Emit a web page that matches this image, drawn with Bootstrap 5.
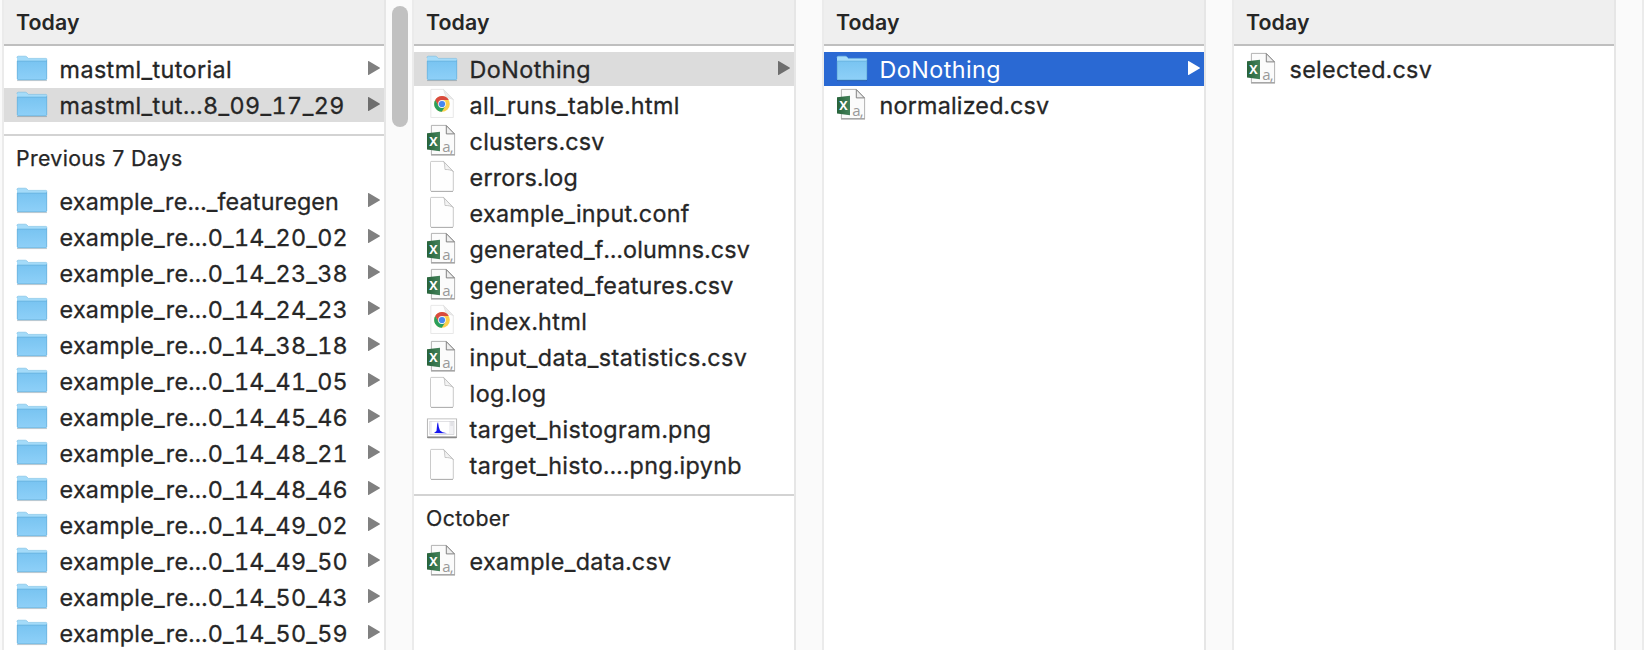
<!DOCTYPE html>
<html lang="en">
<head>
<meta charset="utf-8">
<title>Finder columns</title>
<link href="https://cdn.jsdelivr.net/npm/bootstrap@5.3.0/dist/css/bootstrap.min.css" rel="stylesheet">
<style>
body{font-family:Inter,"Liberation Sans",sans-serif;color:#262626;background:#fafafa}
.browser{width:1644px;height:650px;padding-left:2px}
.pane{width:384px;border-left:2px solid #ebebeb;border-right:2px solid #e6e6e6;background:#fff}
.gutter{width:26px;background:#fafafa}
.pane-head{height:46px;background:#efefef;border-bottom:2px solid #bfbfbf;padding-left:12px;font-size:21.3px;font-weight:600;line-height:44px;letter-spacing:.1px}
.group-head{height:50px;margin-top:12px;border-top:2px solid #d3d3d3;padding-left:12px;font-size:21.3px;line-height:44px;letter-spacing:.36px;-webkit-text-stroke:.25px currentColor}
.entries{padding-top:6px}
.entry{height:34px;margin-bottom:2px;padding-left:12px;padding-right:4px;font-size:23.3px;line-height:36px;letter-spacing:.25px;font-feature-settings:"tnum"}
.entry span{-webkit-text-stroke:.3px currentColor}
.active-row span{-webkit-text-stroke:0}
.group-head + .entries{padding-top:0}
.entries .entry:last-child{margin-bottom:0}
.entry svg{flex:none}
.entry .pic{width:32px;height:34px;margin-right:11.6px}
.arrow{width:12px;height:14px;fill:#808080;margin-left:auto;margin-top:9px}
.inactive{background:#dcdcdc}
.inactive .arrow{fill:#6e6e6e}
.active-row{background:#2a69d3;color:#fff}
.active-row .arrow{fill:#fff}
.thumb{width:16px;height:121px;margin:6px 0 0 6px;background:#c1c1c1;border-radius:8px}
</style>
</head>
<body>
<svg width="0" height="0" class="position-absolute" aria-hidden="true">
  <defs>
    <linearGradient id="fold" x1="0" y1="0" x2="0" y2="1"><stop offset="0" stop-color="#79c4f1"/><stop offset="1" stop-color="#8ed0f8"/></linearGradient>
    <linearGradient id="xl" x1="0" y1="0" x2="1" y2="0"><stop offset="0" stop-color="#27633b"/><stop offset="1" stop-color="#43825a"/></linearGradient>
    <linearGradient id="curl" x1="0" y1="1" x2="1" y2="0"><stop offset="0" stop-color="#fff"/><stop offset="1" stop-color="#dedede"/></linearGradient>
    <symbol id="folder" viewBox="0 0 32 34">
      <path d="M1 28.6h30" stroke="#000" stroke-opacity=".2" stroke-width="1"/>
      <path d="M1 8V5.5Q1 4.2 2.3 4.2H9.3Q10.3 4.2 11 5L12.3 6.4H29.8Q31 6.4 31 7.6V12H1Z" fill="#a4dbf9"/>
      <path d="M1 6V5.5Q1 4.2 2.3 4.2H9.3Q10.3 4.2 11 5L12.3 6.4H29.8Q31 6.4 31 7.6" fill="none" stroke="#77bce3" stroke-width=".6"/>
      <path d="M1 9.3H31V27Q31 28 30 28H2Q1 28 1 27Z" fill="url(#fold)"/>
      <path d="M1 9.2H31" stroke="#63b0df" stroke-width=".9"/>
      <path d="M1.3 9V27M30.7 8V27M1.5 27.8H30.5" stroke="#68b0da" stroke-width=".7"/>
    </symbol>
    <symbol id="blank" viewBox="0 0 32 34">
      <path d="M5 1.4H17.5L27.3 11.5V30Q27.3 31.3 26.3 31.3H5.5Q4.5 31.3 4.5 30V2.5Q4.5 1.4 5 1.4Z" fill="#fefefe" stroke="#c4c4c4" stroke-width=".9"/>
      <path d="M5 31.5H27" stroke="#a8a8a8" stroke-width=".8"/>
      <path d="M17.5 1.4C19 3 18.5 6.5 19 9.5C22 9.4 25.5 10 27.3 11.5Z" fill="url(#curl)" stroke="#bbb" stroke-width=".8"/>
    </symbol>
    <symbol id="chrome" viewBox="0 0 32 34">
      <path d="M5 1.4H17.5L27.3 11.5V29.5H4.8V1.6Z" fill="#fefefe" stroke="#e2e2e2" stroke-width=".8"/>
      <path d="M17.5 1.4L27.3 11.5L20 9Z" fill="#ececec" stroke="#dedede" stroke-width=".7"/>
      <circle cx="16" cy="16" r="7.8" fill="#fbd04b"/>
      <path d="M9.2 12.1A7.8 7.8 0 0 1 22.8 12.1H16L12.6 18Z" fill="#d94a3e"/>
      <path d="M9.2 12.1L12.6 18L19.4 18L15.8 23.8A7.8 7.8 0 0 1 9.2 12.1Z" fill="#2a9f5c"/>
      <circle cx="16" cy="16" r="3.9" fill="#f4f4f4"/><circle cx="16" cy="16" r="3.1" fill="#4587f1"/>
    </symbol>
    <symbol id="csv" viewBox="0 0 32 34">
      <path d="M5.4 1.4H20.3L28.6 10V30.6H5.4Z" fill="#fbfbfb" stroke="#aaa" stroke-width=".9"/>
      <path d="M5 31H29" stroke="#8c8c8c" stroke-width=".9"/>
      <path d="M20.3 1.6V9.9H28.4Z" fill="#eee" stroke="#777" stroke-width=".9"/>
      <path d="M1 9.2L14 7.8V27.2L1 25.6Z" fill="url(#xl)"/>
      <text x="3.3" y="22" font-family="Open Sans" font-size="12.5" font-weight="700" fill="#fff" letter-spacing="0" style="-webkit-text-stroke:0">X</text>
      <text x="16.3" y="27.6" font-family="Open Sans" font-size="15" fill="#999" letter-spacing="-.8">a,</text>
    </symbol>
    <symbol id="hist" viewBox="0 0 32 34">
      <rect x="1" y="7.3" width="30" height="19" rx="1" fill="#888"/>
      <rect x="1.3" y="6.9" width="29.4" height="17.8" fill="#fff" stroke="#aaa" stroke-width=".7"/>
      <rect x="3.8" y="9.3" width="24.2" height="13.2" fill="#f1f1f4" stroke="#c9c9ce" stroke-width=".6"/>
      <rect x="6" y="9.8" width="17" height="11.5" fill="#fff"/>
      <path d="M8 21L10.5 19L11.2 12L12 10L12.8 15L14 18.5L16.5 20.2L21 21.2Z" fill="#1515ef"/>
      <path d="M24.3 11H27M24.3 13H27" stroke="#c5c5cc" stroke-width=".7"/>
    </symbol>
    <symbol id="tri" viewBox="0 0 12 14"><path d="M.6 0L11.6 6.4Q12.2 7 11.6 7.6L.6 14Q0 14.2 0 13.5V.5Q0-.2.6 0Z"/></symbol>
  </defs>
</svg>
<main class="browser d-flex overflow-hidden">
  <section class="pane flex-shrink-0">
    <div class="pane-head">Today</div>
    <div class="entries" data-list="folder|mastml_tutorial|.41|arrow;folder|mastml_tut...8_09_17_29|.42|arrow|inactive"></div>
    <div class="group-head">Previous 7 Days</div>
    <div class="entries" data-list="folder|example_re..._featuregen|.17|arrow;folder|example_re...0_14_20_02|.25|arrow;folder|example_re...0_14_23_38|.25|arrow;folder|example_re...0_14_24_23|.25|arrow;folder|example_re...0_14_38_18|.25|arrow;folder|example_re...0_14_41_05|.25|arrow;folder|example_re...0_14_45_46|.25|arrow;folder|example_re...0_14_48_21|.25|arrow;folder|example_re...0_14_48_46|.25|arrow;folder|example_re...0_14_49_02|.25|arrow;folder|example_re...0_14_49_50|.25|arrow;folder|example_re...0_14_50_43|.25|arrow;folder|example_re...0_14_50_59|.25|arrow"></div>
  </section>
  <div class="gutter flex-shrink-0"><div class="thumb"></div></div>
  <section class="pane flex-shrink-0">
    <div class="pane-head">Today</div>
    <div class="entries" data-list="folder|DoNothing|.45|arrow|inactive;chrome|all_runs_table.html|.38;csv|clusters.csv|.25;blank|errors.log|.2;blank|example_input.conf|.27;csv|generated_f...olumns.csv|.22;csv|generated_features.csv|.26;chrome|index.html|.47;csv|input_data_statistics.csv|.43;blank|log.log|.4;hist|target_histogram.png|.38;blank|target_histo....png.ipynb|.36"></div>
    <div class="group-head">October</div>
    <div class="entries" data-list="csv|example_data.csv|.34"></div>
  </section>
  <div class="gutter flex-shrink-0"></div>
  <section class="pane flex-shrink-0">
    <div class="pane-head">Today</div>
    <div class="entries" data-list="folder|DoNothing|.45|arrow|active-row;csv|normalized.csv|.2"></div>
  </section>
  <div class="gutter flex-shrink-0"></div>
  <section class="pane flex-shrink-0">
    <div class="pane-head">Today</div>
    <div class="entries" data-list="csv|selected.csv|.32"></div>
  </section>
  <div class="gutter flex-shrink-0"></div>
  <section class="pane flex-shrink-0"></section>
</main>
<script src="https://cdn.jsdelivr.net/npm/bootstrap@5.3.0/dist/js/bootstrap.bundle.min.js"></script>
<script>
document.querySelectorAll('[data-list]').forEach(list => {
  list.innerHTML = list.dataset.list.split(';').map(line => {
    const [icon, name, tracking, arrow, state] = line.split('|');
    return `<div class="entry d-flex ${state || ''}"><svg class="pic"><use href="#${icon}"/></svg><span class="text-nowrap" style="letter-spacing:${tracking}px">${name}</span>${arrow ? '<svg class="arrow"><use href="#tri"/></svg>' : ''}</div>`;
  }).join('');
});
</script>
</body>
</html>
